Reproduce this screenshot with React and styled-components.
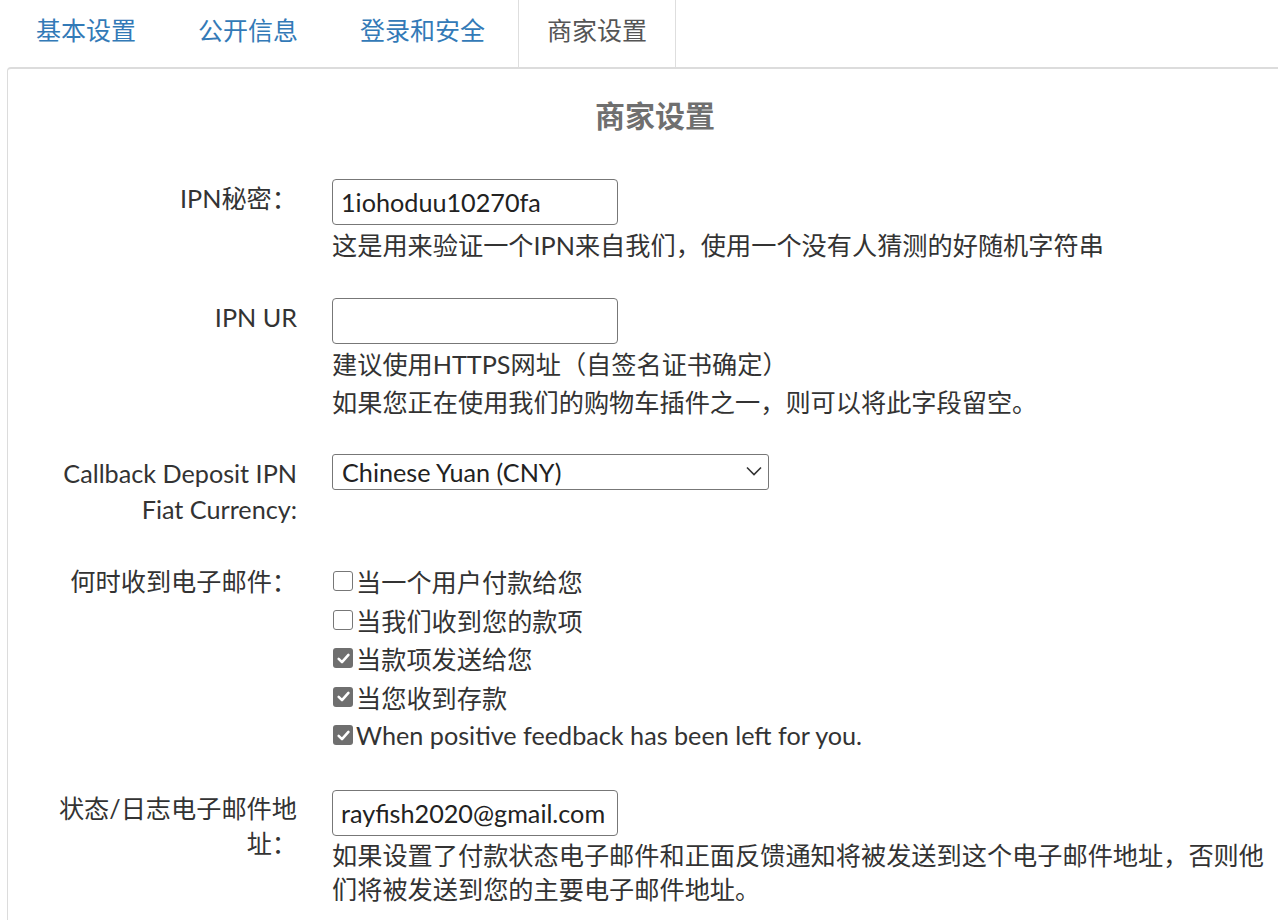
import React from 'react';
import styled, { createGlobalStyle } from 'styled-components';

const GlobalStyle = createGlobalStyle`
  html, body {
    margin: 0;
    padding: 0;
    background: #fff;
    overflow: hidden;
  }
  body {
    font-family: Lato, "Noto Sans CJK SC", sans-serif;
    font-size: 25.2px;
    color: #333;
  }
`;

const Page = styled.div`
  width: 1296px;
  padding-left: 7px;
`;

const Tabs = styled.ul`
  display: flex;
  margin: 0;
  padding: 0;
  list-style: none;
  height: 67px;
`;

const Tab = styled.li`
  margin-right: 4px;
  padding: 0 28px;
  font-size: 25px;
  line-height: 60px;
  border: 1px solid ${({ $active }) => ($active ? '#dedede' : 'transparent')};
  border-top: none;
  border-bottom: none;
  background: #fff;
  color: ${({ $active }) => ($active ? '#555' : '#337ab7')};
  cursor: pointer;
`;

const Panel = styled.section`
  border: 1px solid #dcdcdc;
  border-top-width: 2px;
  border-top-left-radius: 4px;
  padding-bottom: 40px;
`;

const Heading = styled.h3`
  margin: 26px 0 44px;
  text-align: center;
  font-size: 30px;
  line-height: 40px;
  font-weight: 700;
  color: #6f6f6f;
`;

const Row = styled.div`
  display: grid;
  grid-template-columns: 289px 945px;
  column-gap: 35px;
  margin-bottom: 35px;
`;

const Label = styled.label`
  padding-left: 39px;
  padding-top: ${({ $top }) => $top || 0}px;
  text-align: right;
  line-height: ${({ $lh }) => $lh || 36}px;
`;

const Field = styled.div`
  display: flex;
  flex-direction: column;
  align-items: flex-start;
`;

const TextInput = styled.input`
  box-sizing: border-box;
  width: 286px;
  height: 46px;
  margin: 0;
  padding: 0 8px;
  border: 1px solid #777;
  border-radius: 4px;
  font: inherit;
  color: #222;
  outline: none;
`;

const Help = styled.p`
  margin: 2px 0 0;
  line-height: ${({ $lh }) => $lh || 36}px;
`;

const SelectWrap = styled.div`
  position: relative;
  width: 437px;
  margin-top: -1px;
`;

const Select = styled.select`
  box-sizing: border-box;
  width: 100%;
  height: 36px;
  margin: 0;
  padding: 0 40px 0 9px;
  border: 1px solid #777;
  border-radius: 3px;
  background: #fff;
  font: inherit;
  color: #222;
  appearance: none;
  outline: none;
`;

const Chevron = styled.svg`
  position: absolute;
  right: 7px;
  top: 12px;
  pointer-events: none;
`;

const CheckList = styled.div`
  display: flex;
  flex-direction: column;
`;

const CheckItem = styled.label`
  display: flex;
  align-items: center;
  height: 38.5px;
  color: #333;
`;

const Box = styled.span`
  box-sizing: border-box;
  display: inline-flex;
  flex-shrink: 0;
  align-items: center;
  justify-content: center;
  width: 20px;
  height: 20px;
  margin: 0 3px 0 1px;
  border-radius: 3px;
  border: ${({ $checked }) => ($checked ? 'none' : '1.5px solid #777')};
  background: ${({ $checked }) => ($checked ? '#6f6f6f' : '#fff')};
`;

const tabs = ['基本设置', '公开信息', '登录和安全', '商家设置'];

const checks = [
  { text: '当一个用户付款给您', checked: false },
  { text: '当我们收到您的款项', checked: false },
  { text: '当款项发送给您', checked: true },
  { text: '当您收到存款', checked: true },
  { text: 'When positive feedback has been left for you.', checked: true },
];

const Check = ({ checked, children }) => (
  <CheckItem>
    <Box $checked={checked}>
      {checked && (
        <svg width="15" height="15" viewBox="0 0 14 14">
          <path d="M2.5 7.4 L5.6 10.4 L11.6 3.6" fill="none" stroke="#fff" strokeWidth="2.4" strokeLinecap="round" strokeLinejoin="round" />
        </svg>
      )}
    </Box>
    {children}
  </CheckItem>
);

export default function App() {
  return (
    <>
      <GlobalStyle />
      <Page>
        <Tabs>
          {tabs.map((t, i) => (
            <Tab key={t} $active={i === 3}>{t}</Tab>
          ))}
        </Tabs>
        <Panel>
          <Heading>商家设置</Heading>

          <Row>
            <Label $top={1}>IPN秘密：</Label>
            <Field>
              <TextInput defaultValue="1iohoduu10270fa" />
              <Help>这是用来验证一个IPN来自我们，使用一个没有人猜测的好随机字符串</Help>
            </Field>
          </Row>

          <Row>
            <Label $top={1}>IPN UR</Label>
            <Field>
              <TextInput defaultValue="" />
              <Help>建议使用HTTPS网址（自签名证书确定）</Help>
              <Help>如果您正在使用我们的购物车插件之一，则可以将此字段留空。</Help>
            </Field>
          </Row>

          <Row>
            <Label>Callback Deposit IPN Fiat Currency:</Label>
            <Field>
              <SelectWrap>
                <Select defaultValue="CNY">
                  <option value="CNY">Chinese Yuan (CNY)</option>
                  <option value="USD">US Dollar (USD)</option>
                </Select>
                <Chevron width="16" height="10" viewBox="0 0 16 10">
                  <path d="M1 1.5 L8 8.5 L15 1.5" fill="none" stroke="#333" strokeWidth="1.6" />
                </Chevron>
              </SelectWrap>
            </Field>
          </Row>

          <Row>
            <Label $top={1}>何时收到电子邮件：</Label>
            <CheckList>
              {checks.map(c => (
                <Check key={c.text} checked={c.checked}>{c.text}</Check>
              ))}
            </CheckList>
          </Row>

          <Row>
            <Label $top={1} $lh={35}>状态/日志电子邮件地址：</Label>
            <Field>
              <TextInput defaultValue="rayfish2020@gmail.com" />
              <Help $lh={34}>
                如果设置了付款状态电子邮件和正面反馈通知将被发送到这个电子邮件地址，否则他们将被发送到您的主要电子邮件地址。
              </Help>
            </Field>
          </Row>
        </Panel>
      </Page>
    </>
  );
}
